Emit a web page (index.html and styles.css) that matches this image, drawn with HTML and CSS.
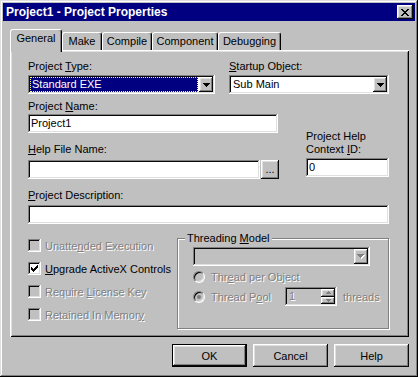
FILE: index.html
```html
<!DOCTYPE html>
<html lang="en">
<head>
    <meta charset="UTF-8">
    <title>Project1 - Project Properties</title>
    <link rel="stylesheet" href="styles.css">
</head>
<body>
    <div class="window">
        <div class="titlebar">
            <span class="title">Project1 - Project Properties</span>
            <span class="btn-close raised">
                <svg width="8" height="7" viewBox="0 0 8 7" shape-rendering="crispEdges"><path d="M0 0h2v1h-2z M6 0h2v1h-2z M1 1h2v1h-2z M5 1h2v1h-2z M2 2h4v1h-4z M3 3h2v1h-2z M2 4h4v1h-4z M1 5h2v1h-2z M5 5h2v1h-2z M0 6h2v1h-2z M6 6h2v1h-2z" fill="#000"/></svg>
            </span>
        </div>

        <div class="tabs">
            <div class="tab tab-general active">General</div>
            <div class="tab tab-make">Make</div>
            <div class="tab tab-compile">Compile</div>
            <div class="tab tab-component">Component</div>
            <div class="tab tab-debug">Debugging</div>
        </div>

        <div class="panel">
            <div class="row-top">
                <div class="f-type">
                    <span class="lbl">Project <u>T</u>ype:</span>
                    <div class="combo sunken">
                        <span class="combo-value focused">Standard EXE</span>
                        <span class="drop raised"><svg width="7" height="4" viewBox="0 0 7 4" shape-rendering="crispEdges"><path d="M0 0h7v1h-7z M1 1h5v1h-5z M2 2h3v1h-3z M3 3h1v1h-1z" fill="#000"/></svg></span>
                    </div>
                </div>
                <div class="f-start">
                    <span class="lbl"><u>S</u>tartup Object:</span>
                    <div class="combo sunken">
                        <span class="combo-value">Sub Main</span>
                        <span class="drop raised"><svg width="7" height="4" viewBox="0 0 7 4" shape-rendering="crispEdges"><path d="M0 0h7v1h-7z M1 1h5v1h-5z M2 2h3v1h-3z M3 3h1v1h-1z" fill="#000"/></svg></span>
                    </div>
                </div>
            </div>

            <div class="mid">
                <div class="col-left">
                    <span class="lbl lbl-name">Project <u>N</u>ame:</span>
                    <div class="text sunken in-name">Project1</div>
                    <span class="lbl lbl-help"><u>H</u>elp File Name:</span>
                    <div class="help-row">
                        <div class="text sunken in-help"></div>
                        <span class="btn-browse raised">...</span>
                    </div>
                </div>
                <div class="col-right">
                    <span class="lbl lbl-ctx">Project Help<br>Context <u>I</u>D:</span>
                    <div class="text sunken in-ctx">0</div>
                </div>
            </div>

            <div class="desc">
                <span class="lbl lbl-desc"><u>P</u>roject Description:</span>
                <div class="text sunken in-desc"></div>
            </div>

            <div class="bottom">
                <div class="checks">
                    <div class="check disabled"><span class="box sunken"></span><span class="dim">Unatte<u>n</u>ded Execution</span></div>
                    <div class="check"><span class="box sunken"><svg width="7" height="7" viewBox="0 0 7 7" shape-rendering="crispEdges"><path d="M6 0h1v1h-1z M5 1h2v1h-2z M0 2h1v1h-1z M4 2h3v1h-3z M0 3h2v1h-2z M3 3h3v1h-3z M0 4h5v1h-5z M1 5h3v1h-3z M2 6h1v1h-1z" fill="#000"/></svg></span><span><u>U</u>pgrade ActiveX Controls</span></div>
                    <div class="check disabled"><span class="box sunken"></span><span class="dim">Require <u>L</u>icense Key</span></div>
                    <div class="check disabled"><span class="box sunken"></span><span class="dim">Retained In Memor<u>y</u></span></div>
                </div>

                <fieldset class="group">
                    <legend>Threading <u>M</u>odel</legend>
                    <div class="combo sunken dis-combo">
                        <span class="drop raised"><svg width="8" height="5" viewBox="0 0 8 5" shape-rendering="crispEdges"><path d="M1 1h7v1h-7z M2 2h5v1h-5z M3 3h3v1h-3z M4 4h1v1h-1z" fill="#fff"/><path d="M0 0h7v1h-7z M1 1h5v1h-5z M2 2h3v1h-3z M3 3h1v1h-1z" fill="#808080"/></svg></span>
                    </div>
                    <div class="radio-row r1">
                        <span class="radio"></span>
                        <span class="dim">Thr<u>e</u>ad per Object</span>
                    </div>
                    <div class="radio-row r2">
                        <span class="radio"><span class="dot"></span></span>
                        <span class="dim pool-label">Thread P<u>o</u>ol</span>
                        <div class="spin sunken">
                            <span class="spin-val dim">1</span>
                            <span class="spin-btns">
                                <span class="spin-btn raised"><svg width="5" height="3" viewBox="0 0 5 3" shape-rendering="crispEdges"><path d="M2 0h1v1h-1z M1 1h3v1h-3z M0 2h5v1h-5z" fill="#808080"/></svg></span>
                                <span class="spin-btn raised"><svg width="5" height="3" viewBox="0 0 5 3" shape-rendering="crispEdges"><path d="M0 0h5v1h-5z M1 1h3v1h-3z M2 2h1v1h-1z" fill="#808080"/></svg></span>
                            </span>
                        </div>
                        <span class="dim threads">threads</span>
                    </div>
                </fieldset>
            </div>
        </div>

        <div class="actions">
            <button class="btn default raised">OK</button>
            <button class="btn raised">Cancel</button>
            <button class="btn raised">Help</button>
        </div>
    </div>
</body>
</html>
```

FILE: styles.css
```css
body {
    margin: 0;
    font-family: "Liberation Sans", Arial, sans-serif;
    font-size: 11px;
    color: #000;
}
u {
    text-decoration: underline;
    text-underline-offset: 1px;
}
.window {
    width: 418px;
    height: 377px;
    box-sizing: border-box;
    padding: 3px;
    background: #c0c0c0;
    box-shadow: inset -1px -1px #000, inset 1px 1px #dfdfdf, inset -2px -2px #808080, inset 2px 2px #fff;
}
.raised {
    background: #c0c0c0;
    box-shadow: inset -1px -1px #0a0a0a, inset 1px 1px #fff, inset -2px -2px #808080, inset 2px 2px #dfdfdf;
}
.sunken {
    background: #fff;
    box-shadow: inset -1px -1px #fff, inset 1px 1px #808080, inset -2px -2px #dfdfdf, inset 2px 2px #0a0a0a;
}
.dim {
    color: #808080;
    text-shadow: 1px 1px 0 #fff;
}

/* title bar */
.titlebar {
    height: 18px;
    box-sizing: border-box;
    padding: 0 2px 0 3px;
    background: #000080;
    color: #fff;
    display: flex;
    align-items: center;
    justify-content: space-between;
}
.title {
    font-weight: bold;
    font-size: 12px;
    line-height: 14px;
}
.btn-close {
    width: 16px;
    height: 14px;
    display: flex;
    align-items: center;
    justify-content: center;
}

/* tabs */
.tabs {
    display: flex;
    align-items: flex-end;
    height: 21px;
    margin: 8px 0 0 7px;
}
.tab {
    box-sizing: border-box;
    height: 18px;
    padding-top: 2px;
    line-height: 13px;
    text-align: center;
    background: #c0c0c0;
    border-top: 1px solid #fff;
    border-left: 1px solid #fff;
    border-right: 1px solid #000;
    border-radius: 3px 3px 0 0;
    box-shadow: inset -1px 0 #808080;
}
.tab.active {
    height: 23px;
    margin-bottom: -2px;
    position: relative;
    z-index: 1;
}
.tab-general { width: 52px; }
.tab-make { width: 40px; }
.tab-compile { width: 50px; }
.tab-component { width: 66px; }
.tab-debug { width: 63px; }

.panel {
    box-sizing: border-box;
    width: 399px;
    height: 287px;
    margin-left: 7px;
    padding: 10px 0 0 18px;
    box-shadow: inset 1px 1px #fff, inset -1px -1px #000, inset 2px 2px #dfdfdf, inset -2px -2px #808080;
}

.lbl {
    display: block;
    line-height: 13px;
    white-space: nowrap;
}

/* combos */
.row-top {
    display: flex;
}
.row-top .lbl {
    margin-bottom: 2px;
}
.f-type { width: 187px; }
.f-start { width: 160px; margin-left: 14px; }
.combo {
    display: flex;
    height: 19px;
    box-sizing: border-box;
    padding: 2px;
}
.combo-value {
    flex: 1;
    line-height: 13px;
    padding-left: 1px;
    margin-right: 1px;
    border: 1px solid transparent;
    white-space: nowrap;
}
.combo-value.focused {
    background: #000080;
    color: #fff;
    border: 1px dotted #ffff80;
}
.drop {
    width: 14px;
    height: 15px;
    display: flex;
    align-items: center;
    justify-content: center;
}

/* text fields */
.mid {
    display: flex;
    align-items: flex-end;
    margin-top: 6px;
}
.col-left { width: 251px; }
.lbl-name { margin-bottom: 1px; }
.text {
    height: 19px;
    box-sizing: border-box;
    padding: 0 3px;
    line-height: 19px;
}
.in-name { width: 250px; }
.lbl-help { margin: 10px 0 4px; }
.help-row { display: flex; }
.in-help { width: 232px; }
.btn-browse {
    width: 18px;
    height: 19px;
    margin-left: 1px;
    line-height: 19px;
    text-align: center;
}
.col-right {
    width: 83px;
    margin: 0 0 2px 27px;
}
.lbl-ctx { margin-bottom: 2px; }
.in-ctx { width: 83px; }

.desc { margin-top: 10px; }
.lbl-desc { margin-bottom: 3px; }
.in-desc { width: 361px; }

/* checkboxes and threading */
.bottom {
    display: flex;
    margin-top: 8px;
}
.checks {
    width: 149px;
    padding-top: 5px;
}
.check {
    display: flex;
    align-items: center;
    height: 17px;
    margin-bottom: 6px;
    white-space: nowrap;
}
.box {
    width: 13px;
    height: 13px;
    box-sizing: border-box;
    margin-right: 4px;
    display: flex;
    align-items: center;
    justify-content: center;
    flex: none;
}
.check.disabled .box {
    background: #c0c0c0;
}

.group {
    width: 212px;
    box-sizing: border-box;
    min-width: 0;
    margin: 0;
    padding: 2px 0 8px 15px;
    border: 1px solid #808080;
    box-shadow: inset 1px 1px #fff, 1px 1px #fff;
}
.group legend {
    padding: 0 2px;
    margin-left: -8px;
    line-height: 13px;
    background: #c0c0c0;
}
.dis-combo {
    width: 177px;
    background: #c0c0c0;
    justify-content: flex-end;
}
.radio-row {
    display: flex;
    align-items: center;
    white-space: nowrap;
}
.r1 { height: 16px; margin-top: 3px; }
.r2 { height: 19px; margin-top: 2px; }
.radio {
    width: 12px;
    height: 12px;
    box-sizing: border-box;
    flex: none;
    margin-right: 6px;
    border-radius: 50%;
    border: 1px solid;
    border-color: #808080 #fff #fff #808080;
    box-shadow: inset 1px 1px #000, inset -1px -1px #dfdfdf;
    background: #c0c0c0;
    display: flex;
    align-items: center;
    justify-content: center;
}
.dot {
    width: 4px;
    height: 4px;
    border-radius: 50%;
    background: #808080;
}
.pool-label { width: 74px; flex: none; }
.spin {
    width: 52px;
    height: 19px;
    box-sizing: border-box;
    padding: 2px;
    display: flex;
    flex: none;
    background: #c0c0c0;
}
.spin-val {
    flex: 1;
    padding-left: 2px;
    line-height: 15px;
}
.spin-btns {
    width: 14px;
    display: flex;
    flex-direction: column;
}
.spin-btn {
    flex: 1;
    display: flex;
    align-items: center;
    justify-content: center;
}
.threads { margin-left: 6px; }

/* dialog buttons */
.actions {
    display: flex;
    justify-content: flex-end;
    gap: 6px;
    margin: 7px 6px 0 0;
}
.btn {
    width: 75px;
    height: 23px;
    box-sizing: border-box;
    padding: 0;
    border: none;
    font: inherit;
    color: #000;
}
.btn.default {
    border: 1px solid #000;
}
```
